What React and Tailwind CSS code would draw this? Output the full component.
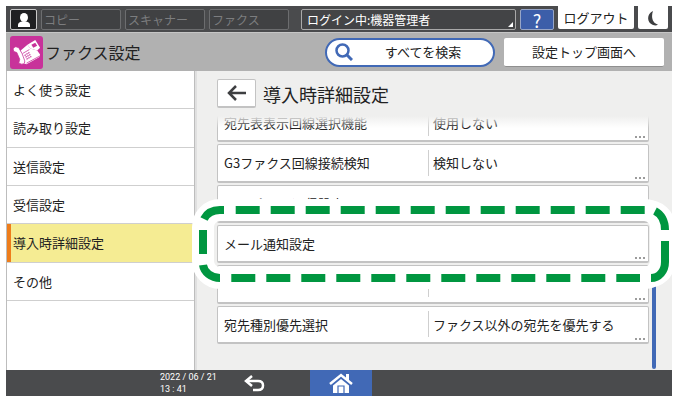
import { useState } from 'react';

const MENU = ['よく使う設定', '読み取り設定', '送信設定', '受信設定', '導入時詳細設定', 'その他'];

const SETTINGS = [
  { label: '宛先表表示回線選択機能', value: '使用しない' },
  { label: 'G3ファクス回線接続検知', value: '検知しない' },
  { label: 'スーパーG3通信設定' },
  { label: 'メール通知設定', highlighted: true },
  { label: '', value: '' },
  { label: '宛先種別優先選択', value: 'ファクス以外の宛先を優先する' },
];

const FaxIcon = () => (
  <svg viewBox="0 0 34 34" className="h-[33px] w-[33px] shrink-0" aria-hidden="true">
    <rect width="34" height="34" rx="3" fill="#c8329a" />
    <path d="M18 9 L26 4 L31 12 L28 15 L21 13 Z" fill="#fff" />
    <path d="M22 9 L26 7 L28 10 L24 12 Z" fill="#c8329a" />
    <path d="M11 15 L18 9 L21 13 L28 15 L31 19 L30 22 L17 29 L11 27 Z" fill="#fff" />
    <path d="M4 16 Q2 12 6 11 L9 12 Q13 18 15 25 Q16 29 12 29 L9 28 L10 24 L7 17 Z" fill="#fff" stroke="#c8329a" strokeWidth="0.800" />
    <path d="M13 18 L20 14 M17 28 L30 21" stroke="#c8329a" strokeWidth="0.800" fill="none" />
    <path d="M15 20 L20 17 M16 22 L21 19 M17 24 L22 21" stroke="#c8329a" strokeWidth="1.200" strokeDasharray="1.500 0.700" />
  </svg>
);

const TopBar = () => (
  <div className="flex h-[26px] items-start gap-1 bg-[#4a4b4d] px-1">
    <button aria-label="ユーザー" className="mt-[3px] flex h-[21px] w-[27px] items-center justify-center rounded-xs border border-[#c9c9c9] bg-[#1f2022]">
      <svg viewBox="0 0 18 16" className="h-4 w-[18px]" fill="#fff" aria-hidden="true">
        <ellipse cx="9" cy="5.500" rx="4" ry="4.500" />
        <path d="M3 15 V13 Q3 10 7 9.500 H11 Q15 10 15 13 V15 Z" />
      </svg>
    </button>
    {['コピー', 'スキャナー', 'ファクス'].map((name) => (
      <button key={name} disabled className="mt-[3px] h-[21px] w-20 shrink-0 rounded-xs border border-[#6c6d6f] bg-[#404143] px-[2px] text-left text-xs leading-[18px] text-[#7c7d7f]">
        {name}
      </button>
    ))}
    <button className="relative mt-[3px] ml-2 h-[21px] flex-1 rounded-xs border border-[#a9a9a9] bg-[#434446] px-[5px] text-left text-xs leading-[18px] text-white">
      ログイン中:機器管理者
      <svg viewBox="0 0 5 5" className="absolute right-[2px] bottom-[2px] h-[5px] w-[5px]" aria-hidden="true">
        <path d="M5 0 V5 H0 Z" fill="#fff" />
      </svg>
    </button>
    <button aria-label="ヘルプ" className="mt-[3px] h-[21px] w-[34px] rounded-xs border border-[#97a5c6] bg-[#3c5ea9] text-lg leading-[18px] text-white">?</button>
    <button className="h-[23px] w-[76px] rounded-b-xs bg-white text-[13px] leading-[22px]">ログアウト</button>
    <button aria-label="省エネ" className="flex h-[23px] w-[30px] items-center justify-center rounded-b-xs bg-white">
      <svg viewBox="0 0 12 16" className="h-4 w-3" aria-hidden="true">
        <path d="M6 1 C0 3 -1 13 6 15 Q9 16 11 14.500 C5 13 4 6 6 1 Z" fill="#3e3f41" />
      </svg>
    </button>
  </div>
);

const Header = () => (
  <header className="flex h-[39px] items-center border-t border-[#c6c6c6] bg-[#b1b1b1] pr-2 pl-1">
    <FaxIcon />
    <h1 className="ml-[2px] flex-1 text-base leading-6">ファクス設定</h1>
    <button className="flex h-[29px] w-[170px] items-center rounded-full border-2 border-[#4169b6] bg-white pl-2 text-[13px]">
      <svg viewBox="0 0 18 18" className="h-[18px] w-[18px]" fill="none" stroke="#4169b6" aria-hidden="true">
        <circle cx="7.500" cy="7.500" r="6" strokeWidth="2.500" />
        <path d="M12 12 L17 17" strokeWidth="3" />
      </svg>
      <span className="flex-1">すべてを検索</span>
    </button>
    <button className="ml-[9px] h-[29px] w-40 rounded-xs border-b border-[#8f8f8f] bg-white text-[13px]">設定トップ画面へ</button>
  </header>
);

const Sidebar = ({ active, onSelect }) => (
  <nav className="w-[189px] shrink-0 border-r border-l border-[#bdbdbd] bg-white">
    <ul className="grid h-[230px] grid-rows-6">
      {MENU.map((item) => (
        <li key={item} className="border-b border-[#cfcfcf]">
          <button
            onClick={() => onSelect(item)}
            className={
              item === active
                ? 'h-full w-full border-l-4 border-[#ee7d1b] bg-[#f5ec93] pl-[2px] text-left text-[13px]'
                : 'h-full w-full pl-[6px] text-left text-[13px]'
            }
          >
            {item}
          </button>
        </li>
      ))}
    </ul>
  </nav>
);

// Dashed frame with a white halo that surrounds the highlighted row
const Highlight = () => (
  <svg viewBox="192 200 480 90" preserveAspectRatio="none" className="pointer-events-none absolute -top-[26px] -left-[25px] z-20 h-[90px] w-[calc(100%+48px)]" fill="none" aria-hidden="true">
    <rect x="203" y="211" width="458" height="68" rx="17" stroke="#fff" strokeWidth="22" />
    <path d="M644 211 Q665 211 665 231 V259 Q665 279 644 279" stroke="#fff" strokeWidth="21" />
    <g stroke="#009640" strokeWidth="8">
      <path d="M235.700 211 H645" strokeDasharray="24 11" />
      <path d="M231.300 279 H640" strokeDasharray="24 11" />
      <path d="M655 212 C661 215 665 222 665 231" />
      <path d="M665 242 V263 C665 272 659 279 651 279" />
      <path d="M204 220 C207 214 213 211 220 211 H224" />
      <path d="M203 231 V255" />
      <path d="M203 266 C204 273 211 279 220 279" />
    </g>
  </svg>
);

const SettingRow = ({ label, value, highlighted }) => (
  <li className="relative">
    <button
      aria-label={label || '設定'}
      className="grid h-full w-full grid-cols-[210fr_220fr] items-center rounded-xs border border-b-2 border-[#c3c3c3] bg-white text-left text-[13px]"
    >
      <span className="pl-[6px]">{label}</span>
      {value !== undefined && (
        <span className="flex h-[26px] items-center border-l border-[#cfcfcf] pl-1">{value}</span>
      )}
      <span className="absolute right-1 bottom-1 flex gap-[2px]">
        <i className="h-[2px] w-[2px] bg-[#9b9b9b]" />
        <i className="h-[2px] w-[2px] bg-[#9b9b9b]" />
        <i className="h-[2px] w-[2px] bg-[#9b9b9b]" />
      </span>
    </button>
    {highlighted && <Highlight />}
  </li>
);

const Footer = () => (
  <footer className="flex h-[26px] items-center bg-[#4a4b4d] pl-[154px] text-white">
    <time className="flex w-[77px] flex-col font-[Roboto,sans-serif] text-[9px] leading-3">
      <span>2022 / 06 / 21</span>
      <span>13 : 41</span>
    </time>
    <button aria-label="戻る" className="flex h-full w-10 items-center pl-[6px]">
      <svg viewBox="0 0 22 17" className="h-[17px] w-[22px]" fill="none" stroke="#fff" strokeWidth="2.500" aria-hidden="true">
        <path d="M3 6 H15 Q20 6 20 10.500 Q20 15 15 15 H10" />
        <path d="M9 1 L3 6 L9 11" />
      </svg>
    </button>
    <button aria-label="ホーム" className="ml-[33px] flex h-full w-[62px] items-center justify-center bg-[#4169b6]">
      <svg viewBox="0 0 24 20" className="h-5 w-6" aria-hidden="true">
        <path d="M1 11 L12 2 L23 11" fill="none" stroke="#fff" strokeWidth="2.500" />
        <path d="M17 1 H20 V8 L17 6 Z" fill="#fff" />
        <path d="M4 12.500 L12 6 L20 12.500 V20 H4 Z" fill="#fff" />
        <path d="M9 20 V13 H15 V20" fill="#fff" stroke="#4169b6" strokeWidth="1.200" />
      </svg>
    </button>
  </footer>
);

const App = () => {
  const [active, setActive] = useState('導入時詳細設定');

  return (
    <div className="bg-white py-[6px] pr-[7px] pl-[6px] font-['Noto_Sans_CJK_JP',sans-serif] text-[#222]">
      <TopBar />
      <Header />
      <div className="flex bg-[#efefee]">
        <Sidebar active={active} onSelect={setActive} />
        <main className="min-w-0 flex-1 border-l-2 border-[#e0e0e0] pr-4 pl-5">
          <div className="relative z-10 flex h-[45px] items-center gap-[7px] bg-[#efefee]">
            <button aria-label="前の画面" className="flex h-[29px] w-[39px] items-center justify-center rounded-xs border border-b-2 border-[#c3c3c3] bg-white">
              <svg viewBox="0 0 20 16" className="h-4 w-5" fill="none" stroke="#3e3f41" strokeWidth="2.500" aria-hidden="true">
                <path d="M19 8 H2 M9 1 L2 8 L9 15" />
              </svg>
            </button>
            <h2 className="text-lg leading-6">{active}</h2>
            <div className="absolute top-full left-0 h-3 w-full bg-linear-to-b from-[#efefee] to-transparent" />
          </div>
          <div className="-mt-3 flex gap-[3px]">
            <ul className="mb-[26px] grid h-60 flex-1 grid-rows-6 gap-[2px]">
              {SETTINGS.map((row, i) => (
                <SettingRow key={i} {...row} />
              ))}
            </ul>
            <div className="mb-px h-[90px] w-1 self-end rounded-xs bg-[#4169b6]" />
          </div>
        </main>
      </div>
      <Footer />
    </div>
  );
};

export default App;
